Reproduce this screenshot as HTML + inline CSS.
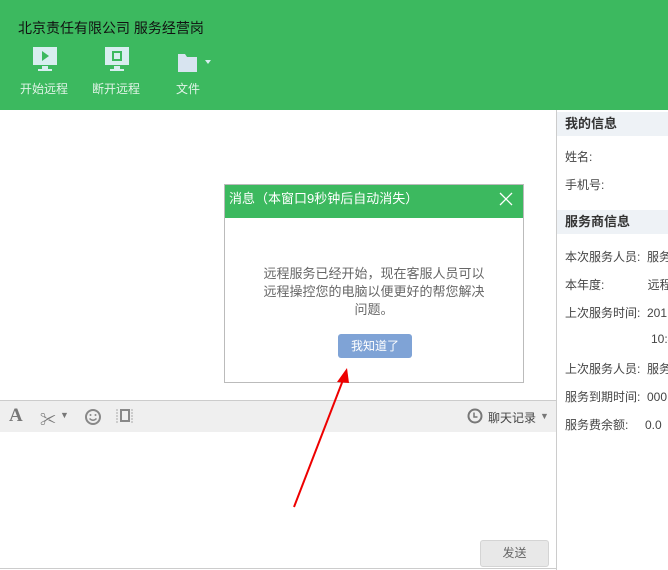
<!DOCTYPE html>
<html><head><meta charset="utf-8"><style>
*{margin:0;padding:0;box-sizing:border-box}
body{width:668px;height:570px;overflow:hidden;background:#fff;font-family:"Liberation Sans","Noto Sans CJK SC",sans-serif;font-size:12px;color:#333;position:relative}
.hdr{position:absolute;left:0;top:0;width:668px;height:110px;background:#3cb95f}
.title{position:absolute;left:18px;top:18px;font-size:14px;color:#111}
.tb{position:absolute;top:80px;font-size:12px;color:#e0f3e6}
.right{position:absolute;left:556px;top:110px;width:112px;height:460px;border-left:1px solid #ccc;background:#fff}
.sec{height:24px;background:#eef2f6;font-weight:bold;font-size:13px;padding-left:8px;line-height:24px;color:#333}
.row{position:absolute;left:8px;font-size:12px;color:#444;white-space:nowrap}
.tool{position:absolute;left:0;top:400px;width:556px;height:32px;background:#efefef;border-top:1px solid #ccc}
.dlg{position:absolute;left:224px;top:184px;width:300px;height:199px;border:1px solid #bbb;background:#fff}
.dt{height:33px;background:#3cb95f;color:#fff;font-size:13px;line-height:28px;padding-left:4px}
</style></head><body>
<div class="hdr">
<div class="title">北京责任有限公司 服务经营岗</div>
<svg style="position:absolute;left:32px;top:46px" width="26" height="26"><rect x="1" y="1" width="24" height="18" fill="#d8eef0"/><path d="M10 5 L17 10 L10 15Z" fill="#3cb95f"/><rect x="10" y="20" width="6" height="3" fill="#d8eef0"/><rect x="6" y="23" width="14" height="2" fill="#d8eef0"/></svg>
<div class="tb" style="left:20px">开始远程</div>
<svg style="position:absolute;left:104px;top:46px" width="26" height="26"><rect x="1" y="1" width="24" height="18" fill="#d8eef0"/><rect x="8" y="5" width="10" height="10" fill="#3cb95f"/><rect x="10" y="7" width="6" height="6" fill="#d8eef0"/><rect x="10" y="20" width="6" height="3" fill="#d8eef0"/><rect x="6" y="23" width="14" height="2" fill="#d8eef0"/></svg>
<div class="tb" style="left:92px">断开远程</div>
<svg style="position:absolute;left:176px;top:52px" width="38" height="22"><path d="M2 2 H9 L11 5 H21 V20 H2Z" fill="#d8e4f0"/><path d="M29 8 L35 8 L32 12Z" fill="#d8eef0"/></svg>
<div class="tb" style="left:176px">文件</div>
</div>
<div class="right">
<div class="sec" style="margin-top:2px">我的信息</div>
<div class="row" style="top:38px">姓名:</div>
<div class="row" style="top:66px">手机号:</div>
<div class="sec" style="position:absolute;top:100px;width:112px">服务商信息</div>
<div class="row" style="top:138px">本次服务人员:&nbsp; 服务</div>
<div class="row" style="top:166px">本年度:&nbsp;&nbsp;&nbsp;&nbsp;&nbsp;&nbsp;&nbsp;&nbsp;&nbsp;&nbsp;&nbsp;&nbsp; 远程</div>
<div class="row" style="top:194px">上次服务时间:&nbsp; 201</div>
<div class="row" style="top:222px;left:94px">10:4</div>
<div class="row" style="top:250px">上次服务人员:&nbsp; 服务</div>
<div class="row" style="top:278px">服务到期时间:&nbsp; 000</div>
<div class="row" style="top:306px">服务费余额:&nbsp;&nbsp;&nbsp;&nbsp; 0.0</div>
</div>
<div class="tool">
<span style="position:absolute;left:9px;top:4px;font-family:'Liberation Serif',serif;font-weight:bold;font-size:19px;color:#777">A</span>
<span style="position:absolute;left:40px;top:5px;font-size:16px;color:#777">✂</span><span style="position:absolute;left:60px;top:9px;font-size:9px;color:#777">▼</span>
<svg style="position:absolute;left:84px;top:7px" width="18" height="18"><circle cx="9" cy="9" r="7" fill="none" stroke="#888" stroke-width="2"/><circle cx="6.5" cy="7" r="1" fill="#888"/><circle cx="11.5" cy="7" r="1" fill="#888"/><path d="M5.5 10.5 Q9 14 12.5 10.5" stroke="#888" fill="none" stroke-width="1.5"/></svg>
<svg style="position:absolute;left:115px;top:6px" width="20" height="18"><rect x="6" y="3" width="8" height="11" fill="none" stroke="#888" stroke-width="2"/><path d="M2 2v14M17 2v14" stroke="#aaa" stroke-dasharray="2 1"/></svg>
<svg style="position:absolute;left:467px;top:7px" width="18" height="18"><circle cx="8" cy="8" r="6.5" fill="none" stroke="#777" stroke-width="2"/><path d="M7 4.5V9H10.5" stroke="#777" fill="none" stroke-width="1.5"/></svg>
<span style="position:absolute;left:488px;top:8px;color:#444">聊天记录</span><span style="position:absolute;left:540px;top:10px;font-size:9px;color:#777">▼</span>
</div>
<div style="position:absolute;left:480px;top:540px;width:69px;height:27px;background:#e8e8e8;border:1px solid #d4d4d4;border-radius:3px;text-align:center;line-height:25px;color:#666">发送</div>
<div style="position:absolute;left:0;top:568px;width:556px;height:1px;background:#ccc"></div>
<div class="dlg">
<div class="dt">消息（本窗口9秒钟后自动消失）<svg style="position:absolute;right:10px;top:7px" width="14" height="14"><path d="M1 1L13 13M13 1L1 13" stroke="#fff" stroke-width="1.3"/></svg></div>
<div style="position:absolute;left:0;top:80px;width:298px;text-align:center;color:#666;font-size:13px;line-height:18px">远程服务已经开始，现在客服人员可以<br>远程操控您的电脑以便更好的帮您解决<br>问题。</div>
<div style="position:absolute;left:113px;top:149px;width:74px;height:24px;background:#7fa3d6;border-radius:3px;color:#fff;text-align:center;line-height:24px">我知道了</div>
</div>
<svg style="position:absolute;left:0;top:0" width="668" height="570"><line x1="294" y1="507" x2="343" y2="380" stroke="#e00" stroke-width="2"/><path d="M347 368 L337 382 L349 383Z" fill="#e00"/></svg>
</body></html>
